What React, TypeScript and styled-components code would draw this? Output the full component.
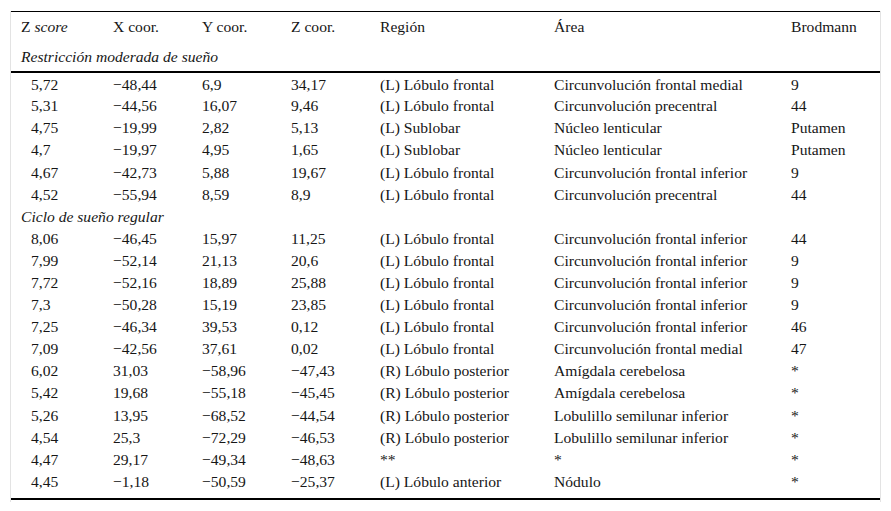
import React from "react";
import styled, { createGlobalStyle } from "styled-components";

const Global = createGlobalStyle`
  html, body { margin: 0; padding: 0; background: #fff; }
  body { font-family: "Liberation Serif", "Times New Roman", serif; color: #161616; }
`;

const Frame = styled.div`
  margin: 11px 10px 0 10px;
  width: 869px;
  border-left: 1px solid #e3e3e3;
  border-right: 1px solid #e3e3e3;
  padding-bottom: 2px;
`;

const Table = styled.table`
  width: 100%;
  border-collapse: collapse;
  table-layout: fixed;
  font-size: 15.6px;
  line-height: 18px;
  border-top: 1px solid #000;
  border-bottom: 2px solid #000;
`;

const HeadCell = styled.th`
  font-weight: normal;
  text-align: left;
  padding: 0 0 1px 10px;
  height: 29px;
  vertical-align: middle;
  white-space: nowrap;
`;

const SectionRow = styled.tr<{ $rule?: boolean }>`
  border-bottom: ${(p) => (p.$rule ? "2px solid #000" : "none")};
`;

const SectionCell = styled.td<{ $tall?: boolean }>`
  font-style: italic;
  padding: ${(p) => (p.$tall ? "0 0 0 10px" : "1px 0 1px 10px")};
  height: ${(p) => (p.$tall ? "29px" : "20.1px")};
  vertical-align: middle;
  white-space: nowrap;
`;

const Cell = styled.td<{ $indent?: boolean; $first?: boolean; $last?: boolean }>`
  padding: ${(p) => (p.$first ? "2px" : "1px")} 0
    ${(p) => (p.$last ? "6px" : "1px")} ${(p) => (p.$indent ? "20px" : "10px")};
  height: ${(p) => (p.$first ? "19.2px" : "20.1px")};
  vertical-align: middle;
  white-space: nowrap;
`;

const Em = styled.i`
  font-style: italic;
`;

type Row = string[];

const groupA: Row[] = [
  ["5,72", "\u221248,44", "6,9", "34,17", "(L) Lóbulo frontal", "Circunvolución frontal medial", "9"],
  ["5,31", "\u221244,56", "16,07", "9,46", "(L) Lóbulo frontal", "Circunvolución precentral", "44"],
  ["4,75", "\u221219,99", "2,82", "5,13", "(L) Sublobar", "Núcleo lenticular", "Putamen"],
  ["4,7", "\u221219,97", "4,95", "1,65", "(L) Sublobar", "Núcleo lenticular", "Putamen"],
  ["4,67", "\u221242,73", "5,88", "19,67", "(L) Lóbulo frontal", "Circunvolución frontal inferior", "9"],
  ["4,52", "\u221255,94", "8,59", "8,9", "(L) Lóbulo frontal", "Circunvolución precentral", "44"],
];

const groupB: Row[] = [
  ["8,06", "\u221246,45", "15,97", "11,25", "(L) Lóbulo frontal", "Circunvolución frontal inferior", "44"],
  ["7,99", "\u221252,14", "21,13", "20,6", "(L) Lóbulo frontal", "Circunvolución frontal inferior", "9"],
  ["7,72", "\u221252,16", "18,89", "25,88", "(L) Lóbulo frontal", "Circunvolución frontal inferior", "9"],
  ["7,3", "\u221250,28", "15,19", "23,85", "(L) Lóbulo frontal", "Circunvolución frontal inferior", "9"],
  ["7,25", "\u221246,34", "39,53", "0,12", "(L) Lóbulo frontal", "Circunvolución frontal inferior", "46"],
  ["7,09", "\u221242,56", "37,61", "0,02", "(L) Lóbulo frontal", "Circunvolución frontal medial", "47"],
  ["6,02", "31,03", "\u221258,96", "\u221247,43", "(R) Lóbulo posterior", "Amígdala cerebelosa", "*"],
  ["5,42", "19,68", "\u221255,18", "\u221245,45", "(R) Lóbulo posterior", "Amígdala cerebelosa", "*"],
  ["5,26", "13,95", "\u221268,52", "\u221244,54", "(R) Lóbulo posterior", "Lobulillo semilunar inferior", "*"],
  ["4,54", "25,3", "\u221272,29", "\u221246,53", "(R) Lóbulo posterior", "Lobulillo semilunar inferior", "*"],
  ["4,47", "29,17", "\u221249,34", "\u221248,63", "**", "*", "*"],
  ["4,45", "\u22121,18", "\u221250,59", "\u221225,37", "(L) Lóbulo anterior", "Nódulo", "*"],
];

const widths = [92, 89, 89, 89, 174, 237, 99];

const DataRow = ({ row, first, last }: { row: Row; first?: boolean; last?: boolean }) => (
  <tr>
    {row.map((v, i) => (
      <Cell key={i} $indent={i === 0} $first={first} $last={last}>
        {v}
      </Cell>
    ))}
  </tr>
);

export default function App() {
  return (
    <>
      <Global />
      <Frame>
        <Table>
          <colgroup>
            {widths.map((w, i) => (
              <col key={i} style={{ width: w }} />
            ))}
          </colgroup>
          <thead>
            <tr>
              <HeadCell>
                Z <Em>score</Em>
              </HeadCell>
              <HeadCell>X coor.</HeadCell>
              <HeadCell>Y coor.</HeadCell>
              <HeadCell>Z coor.</HeadCell>
              <HeadCell>Región</HeadCell>
              <HeadCell>Área</HeadCell>
              <HeadCell>Brodmann</HeadCell>
            </tr>
            <SectionRow $rule>
              <SectionCell $tall colSpan={7}>
                Restricción moderada de sueño
              </SectionCell>
            </SectionRow>
          </thead>
          <tbody>
            {groupA.map((r, i) => (
              <DataRow key={"a" + i} row={r} first={i === 0} />
            ))}
            <SectionRow>
              <SectionCell colSpan={7}>Ciclo de sueño regular</SectionCell>
            </SectionRow>
            {groupB.map((r, i) => (
              <DataRow key={"b" + i} row={r} last={i === groupB.length - 1} />
            ))}
          </tbody>
        </Table>
      </Frame>
    </>
  );
}
